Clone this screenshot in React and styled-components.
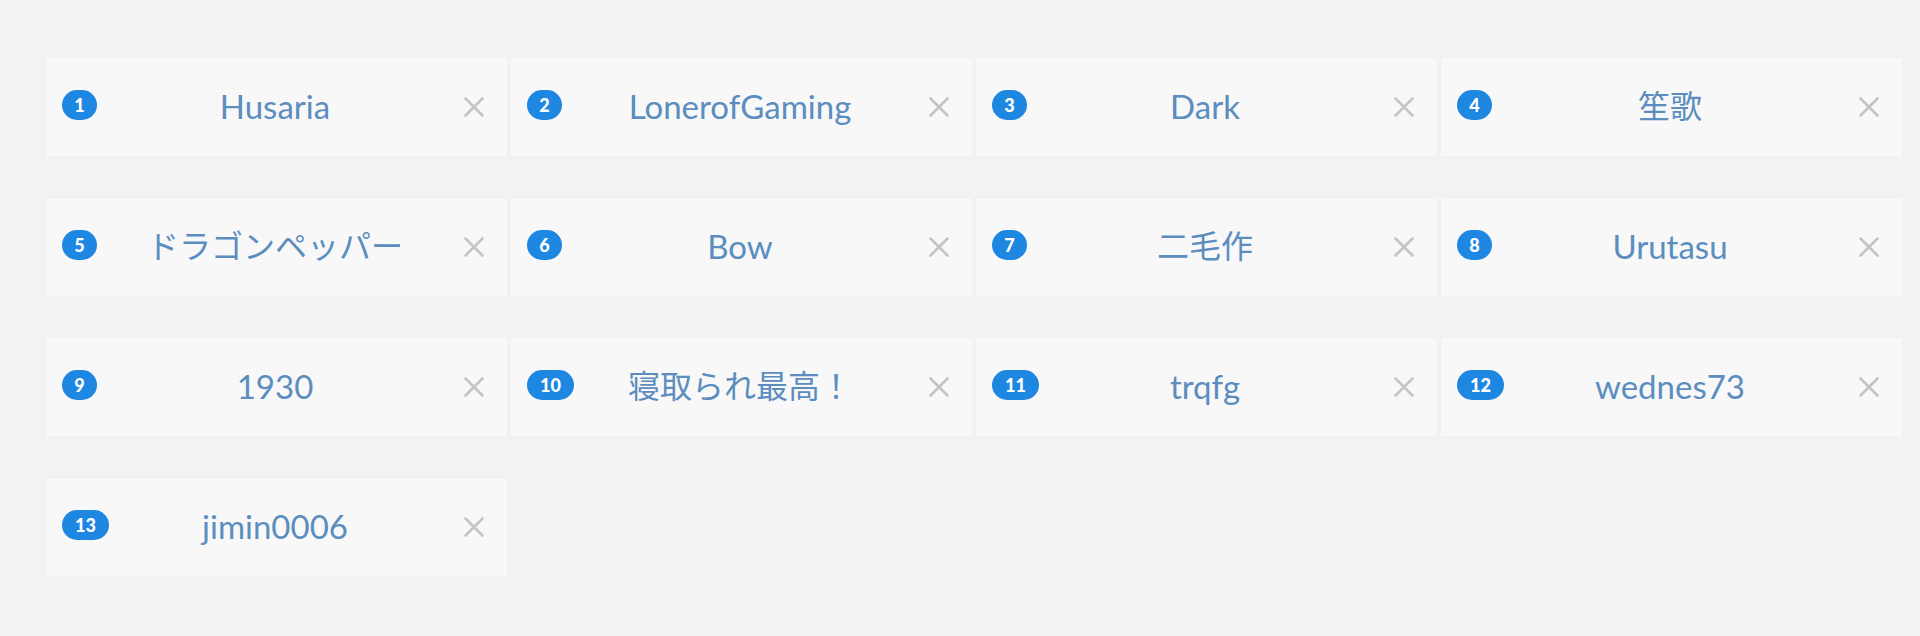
import React from "react";
import styled, { createGlobalStyle } from "styled-components";

const GlobalStyle = createGlobalStyle`
  html, body {
    margin: 0;
    padding: 0;
    background: #f2f2f2;
  }
  body {
    font-family: "Lato", "Noto Sans CJK JP", sans-serif;
  }
`;

const Page = styled.div`
  min-height: 636px;
  box-sizing: border-box;
  padding: 58px 18px 40px 46px;
  background: #f2f2f2;
`;

const Grid = styled.ul`
  list-style: none;
  margin: 0;
  padding: 0;
  display: grid;
  grid-template-columns: repeat(4, 1fr);
  column-gap: 4px;
  row-gap: 42px;
`;

const Card = styled.li`
  height: 98px;
  display: grid;
  grid-template-columns: 1fr auto 1fr;
  align-items: center;
  padding: 0 19px 0 16px;
  background: #f8f8f8;
  box-shadow: 0 0 2px rgba(0, 0, 0, 0.03);
`;

const Badge = styled.span`
  justify-self: start;
  display: inline-flex;
  align-items: center;
  justify-content: center;
  box-sizing: border-box;
  height: 30px;
  min-width: ${(p) => (p.$wide ? 47 : 35)}px;
  padding: 0 8px;
  border-radius: 15px;
  background: #1d87e2;
  color: #ffffff;
  font-family: "Lato", sans-serif;
  font-weight: 900;
  font-size: 18px;
  line-height: 1;
  margin-top: -4px;
`;

const Name = styled.span`
  justify-self: center;
  color: #5b8dbf;
  font-family: "Lato", "Noto Sans CJK JP", sans-serif;
  font-size: 33px;
  line-height: 1;
  white-space: nowrap;
  margin-top: -2px;

  &:lang(ja) {
    font-size: 32px;
  }
`;

const Remove = styled.button`
  justify-self: end;
  display: flex;
  align-items: center;
  justify-content: center;
  width: 28px;
  height: 28px;
  padding: 0;
  border: none;
  background: none;
  cursor: pointer;
  color: #c4c4c4;
`;

const players = [
  { name: "Husaria" },
  { name: "LonerofGaming" },
  { name: "Dark" },
  { name: "笙歌", lang: "ja" },
  { name: "ドラゴンペッパー", lang: "ja" },
  { name: "Bow" },
  { name: "二毛作", lang: "ja" },
  { name: "Urutasu" },
  { name: "1930" },
  { name: "寝取られ最高！", lang: "ja" },
  { name: "trqfg" },
  { name: "wednes73" },
  { name: "jimin0006" },
];

const CloseIcon = () => (
  <svg width="24" height="24" viewBox="0 0 24 24" fill="none">
    <path
      d="M3.5 3.5 L20.5 20.5 M20.5 3.5 L3.5 20.5"
      stroke="currentColor"
      strokeWidth="2.6"
      strokeLinecap="round"
    />
  </svg>
);

export default function App() {
  return (
    <>
      <GlobalStyle />
      <Page>
        <Grid>
          {players.map(({ name, lang }, i) => (
            <Card key={name}>
              <Badge $wide={i + 1 >= 10}>{i + 1}</Badge>
              <Name lang={lang}>{name}</Name>
              <Remove aria-label={`remove ${name}`}>
                <CloseIcon />
              </Remove>
            </Card>
          ))}
        </Grid>
      </Page>
    </>
  );
}
